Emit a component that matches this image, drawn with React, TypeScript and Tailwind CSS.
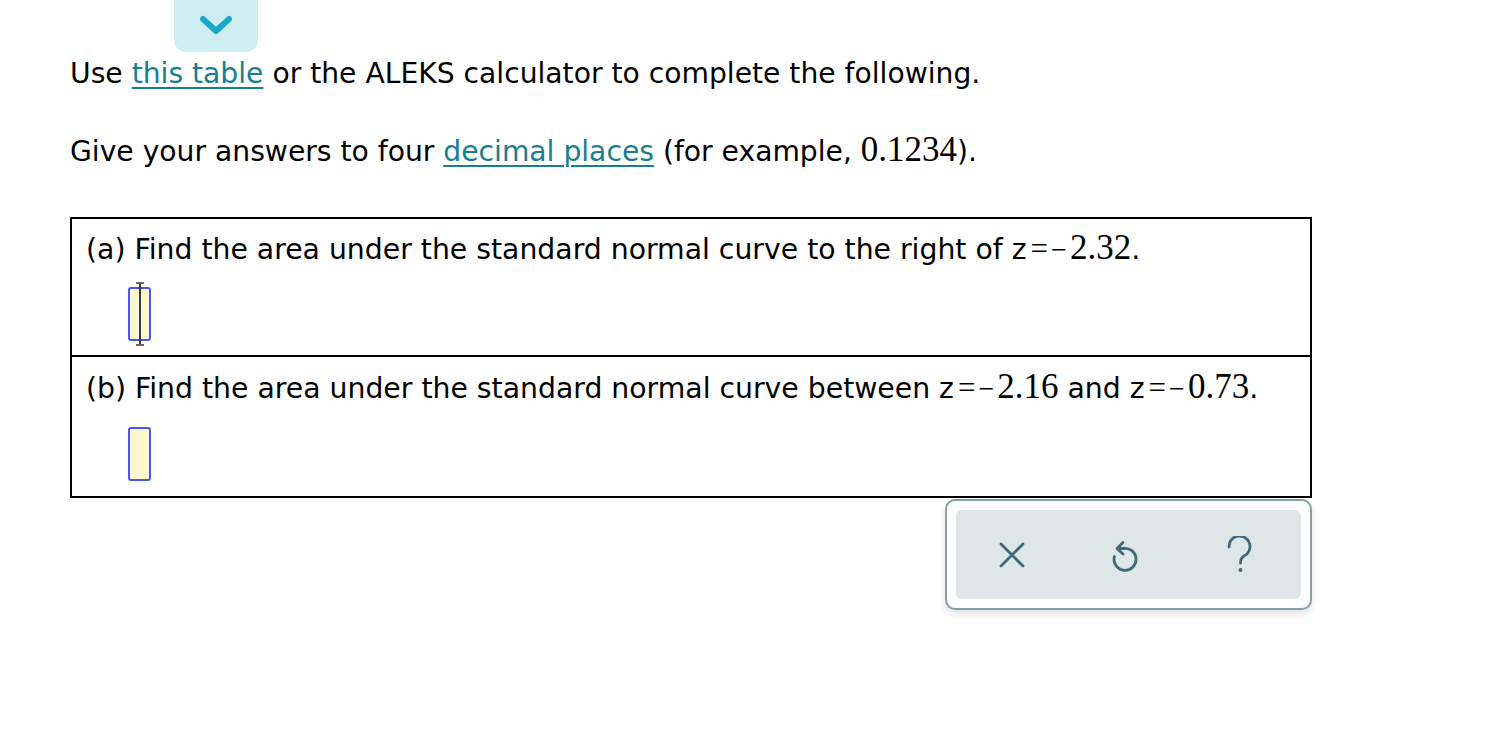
import React from "react";

const serif = { fontFamily: '"Liberation Serif", "Times New Roman", serif' };

function Num({ children }: { children: React.ReactNode }) {
  return (
    <span className="text-[35px] leading-none" style={serif}>
      {children}
    </span>
  );
}

function Eq() {
  return (
    <span className="text-[31px] leading-none pl-[4px] pr-[3px]" style={serif}>
      =
    </span>
  );
}

function Minus() {
  return (
    <span className="text-[28px] leading-none pr-[3px]" style={serif}>
      −
    </span>
  );
}

function InputBox({ active }: { active?: boolean }) {
  return (
    <div className="relative w-[23px] h-[54px] border-2 border-[#4a57f0] bg-[#fdf6d2] rounded-[3px]">
      {active && (
        <>
          <div className="absolute left-1/2 -translate-x-1/2 top-[-6px] bottom-[-6px] w-[2px] bg-[#3a3a3a]" />
          <div className="absolute left-1/2 -translate-x-1/2 top-[-7px] w-[8px] h-[2px] bg-[#666]" />
          <div className="absolute left-1/2 -translate-x-1/2 bottom-[-7px] w-[8px] h-[2px] bg-[#666]" />
        </>
      )}
    </div>
  );
}

export default function App() {
  return (
    <div
      className="w-full h-[730px] bg-white text-black"
      style={{ fontFamily: '"DejaVu Sans", Verdana, sans-serif' }}
    >
      <div className="ml-[174px] w-[84px] h-[52px] bg-[#cdeef3] rounded-b-[12px] flex items-center justify-center">
        <svg width="34" height="22" viewBox="0 0 34 22">
          <polyline
            points="4,4 17,16 30,4"
            fill="none"
            stroke="#1ba9c8"
            strokeWidth="6"
            strokeLinecap="round"
            strokeLinejoin="round"
          />
        </svg>
      </div>

      <div className="ml-[70px] w-[1242px]">
        <p className="mt-[5px] text-[28.2px] leading-[34px]">
          Use{" "}
          <span className="text-[#16808f] underline decoration-[2px] underline-offset-[4px]">
            this table
          </span>{" "}
          or the ALEKS calculator to complete the following.
        </p>
        <p className="mt-[41px] text-[28.2px] leading-[34px]">
          Give your answers to four{" "}
          <span className="text-[#16808f] underline decoration-[2px] underline-offset-[4px]">
            decimal places
          </span>{" "}
          (for example, <Num>0.1234</Num>).
        </p>

        <div className="mt-[48px] border-2 border-black">
          <div className="h-[138px] pl-[14px] pt-[11px] border-b-2 border-black">
            <p className="text-[28.3px] leading-[34px]">
              (a) Find the area under the standard normal curve to the right of z<Eq />
              <Minus />
              <Num>2.32</Num>.
            </p>
            <div className="ml-[42px] mt-[20px]">
              <InputBox active />
            </div>
          </div>
          <div className="h-[139px] pl-[14px] pt-[12px]">
            <p className="text-[28.3px] leading-[34px]">
              (b) Find the area under the standard normal curve between z<Eq />
              <Minus />
              <Num>2.16</Num> and z<Eq />
              <Minus />
              <Num>0.73</Num>.
            </p>
            <div className="ml-[42px] mt-[21px]">
              <InputBox />
            </div>
          </div>
        </div>

        <div className="flex justify-end mt-[1px]">
          <div className="w-[367px] h-[111px] border-2 border-[#84a0a8] rounded-[10px] bg-white p-[9px] shadow-[0_4px_8px_rgba(0,0,0,0.12)]">
            <div className="h-full bg-[#dfe6e8] rounded-[6px] flex items-center justify-around">
              <svg width="26" height="26" viewBox="0 0 26 26">
                <path d="M2 2 L24 24 M24 2 L2 24" stroke="#3f6a78" strokeWidth="2.8" strokeLinecap="round" />
              </svg>
              <svg width="28" height="34" viewBox="0 0 28 34">
                <path
                  d="M12 10.5 A11 11 0 1 1 3.4 18.5"
                  fill="none"
                  stroke="#3f6a78"
                  strokeWidth="2.8"
                  strokeLinecap="round"
                />
                <path
                  d="M12 4.5 L6 10.5 L12 16 M6 10.5 L12.5 10.5"
                  fill="none"
                  stroke="#3f6a78"
                  strokeWidth="2.8"
                  strokeLinecap="round"
                  strokeLinejoin="round"
                />
              </svg>
              <svg width="28" height="38" viewBox="0 0 28 38" className="mr-[4px]">
                <path
                  d="M3 11 A10.5 10.5 0 1 1 18 20 C15.5 21.5 14.5 23 14.5 27"
                  fill="none"
                  stroke="#3f6a78"
                  strokeWidth="2.8"
                  strokeLinecap="round"
                />
                <circle cx="14.5" cy="34" r="2" fill="#3f6a78" />
              </svg>
            </div>
          </div>
        </div>
      </div>
    </div>
  );
}
